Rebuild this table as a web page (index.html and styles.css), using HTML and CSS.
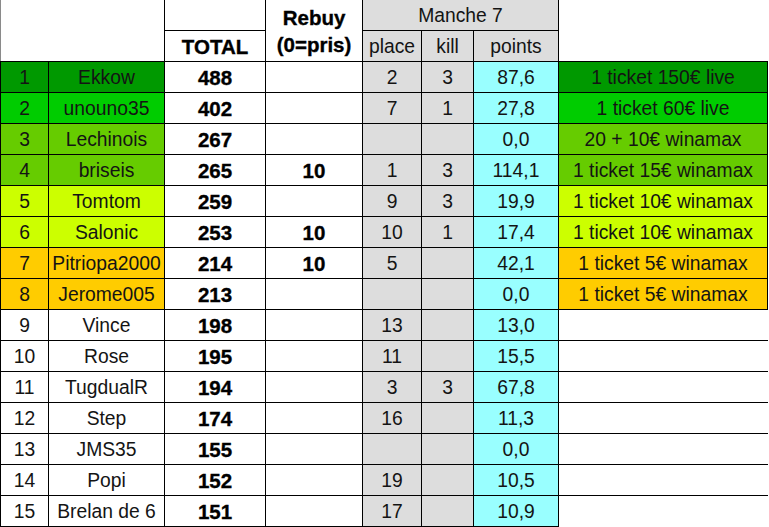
FILE: index.html
```html
<!DOCTYPE html>
<html>
<head>
<meta charset="utf-8">
<link rel="stylesheet" href="styles.css">
</head>
<body>
<table class="sheet">
  <colgroup>
    <col class="c-rank"><col class="c-name"><col class="c-total"><col class="c-rebuy">
    <col class="c-place"><col class="c-kill"><col class="c-points"><col class="c-prize">
  </colgroup>
  <tr class="h1">
    <td class="blank-corner" colspan="2" rowspan="2"></td>
    <td class="hd"></td>
    <td class="hd bold rebuy" rowspan="2">Rebuy<br>(0=pris)</td>
    <td class="hd gray" colspan="3">Manche 7</td>
    <td class="blank" rowspan="2"></td>
  </tr>
  <tr class="h2">
    <td class="hd bold">TOTAL</td>
    <td class="hd gray">place</td>
    <td class="hd gray">kill</td>
    <td class="hd gray">points</td>
  </tr>
  <tr class="r g1"><td>1</td><td>Ekkow</td><td class="bold w">488</td><td class="w"></td><td class="gray">2</td><td class="gray">3</td><td class="cyan">87,6</td><td>1 ticket 150€ live</td></tr>
  <tr class="r g2"><td>2</td><td>unouno35</td><td class="bold w">402</td><td class="w"></td><td class="gray">7</td><td class="gray">1</td><td class="cyan">27,8</td><td>1 ticket 60€ live</td></tr>
  <tr class="r g3"><td>3</td><td>Lechinois</td><td class="bold w">267</td><td class="w"></td><td class="gray"></td><td class="gray"></td><td class="cyan">0,0</td><td>20 + 10€ winamax</td></tr>
  <tr class="r g3"><td>4</td><td>briseis</td><td class="bold w">265</td><td class="bold w">10</td><td class="gray">1</td><td class="gray">3</td><td class="cyan">114,1</td><td>1 ticket 15€ winamax</td></tr>
  <tr class="r g4"><td>5</td><td>Tomtom</td><td class="bold w">259</td><td class="w"></td><td class="gray">9</td><td class="gray">3</td><td class="cyan">19,9</td><td>1 ticket 10€ winamax</td></tr>
  <tr class="r g4"><td>6</td><td>Salonic</td><td class="bold w">253</td><td class="bold w">10</td><td class="gray">10</td><td class="gray">1</td><td class="cyan">17,4</td><td>1 ticket 10€ winamax</td></tr>
  <tr class="r g5"><td>7</td><td>Pitriopa2000</td><td class="bold w">214</td><td class="bold w">10</td><td class="gray">5</td><td class="gray"></td><td class="cyan">42,1</td><td>1 ticket 5€ winamax</td></tr>
  <tr class="r g5"><td>8</td><td>Jerome005</td><td class="bold w">213</td><td class="w"></td><td class="gray"></td><td class="gray"></td><td class="cyan">0,0</td><td>1 ticket 5€ winamax</td></tr>
  <tr class="r"><td>9</td><td>Vince</td><td class="bold">198</td><td></td><td class="gray">13</td><td class="gray"></td><td class="cyan">13,0</td><td class="none"></td></tr>
  <tr class="r"><td>10</td><td>Rose</td><td class="bold">195</td><td></td><td class="gray">11</td><td class="gray"></td><td class="cyan">15,5</td><td class="none"></td></tr>
  <tr class="r"><td>11</td><td>TugdualR</td><td class="bold">194</td><td></td><td class="gray">3</td><td class="gray">3</td><td class="cyan">67,8</td><td class="none"></td></tr>
  <tr class="r"><td>12</td><td>Step</td><td class="bold">174</td><td></td><td class="gray">16</td><td class="gray"></td><td class="cyan">11,3</td><td class="none"></td></tr>
  <tr class="r"><td>13</td><td>JMS35</td><td class="bold">155</td><td></td><td class="gray"></td><td class="gray"></td><td class="cyan">0,0</td><td class="none"></td></tr>
  <tr class="r"><td>14</td><td>Popi</td><td class="bold">152</td><td></td><td class="gray">19</td><td class="gray"></td><td class="cyan">10,5</td><td class="none"></td></tr>
  <tr class="r"><td>15</td><td>Brelan de 6</td><td class="bold">151</td><td></td><td class="gray">17</td><td class="gray"></td><td class="cyan">10,9</td><td class="none"></td></tr>
</table>
</body>
</html>
```
FILE: styles.css
```css
html, body {
  margin: 0;
  padding: 0;
  background: #fff;
}
.sheet {
  border-collapse: collapse;
  table-layout: fixed;
  width: 768px;
  font-family: "Liberation Sans", Arial, sans-serif;
  font-size: 19.3px;
  color: #141414;
}
.c-rank { width: 48px; }
.c-name { width: 116px; }
.c-total { width: 101px; }
.c-rebuy { width: 97px; }
.c-place { width: 59px; }
.c-kill { width: 52px; }
.c-points { width: 85px; }
.c-prize { width: 209px; }

.sheet td {
  border: 1px solid #000;
  text-align: center;
  vertical-align: middle;
  padding: 2px 0 0 0;
  white-space: nowrap;
  overflow: hidden;
}
.h1 { height: 30px; }
.h2 { height: 31px; }
.r { height: 31px; }

.sheet td.hd { padding-top: 3px; }
.sheet td.blank-corner {
  border-top: none;
  border-left: 1px solid #8a8a8a;
  border-bottom: 1px solid #000;
}
.sheet .h1 td { border-top: none; }
.sheet td.blank {
  border-top: none;
  border-right: none;
}
.sheet td.none {
  border-right: none;
  border-bottom: none;
  background: #fff;
}
.sheet td.rebuy { line-height: 27px; padding-top: 2px; }

.bold {
  font-weight: bold;
  font-size: 20.5px;
  color: #000;
  -webkit-text-stroke: 0.35px #000;
}
.gray { background: #dddddd; }
.cyan { background: #99ffff; }
.w { background: #fff; }

.g1 td { background: #009900; }
.g2 td { background: #00cc00; }
.g3 td { background: #66cc00; }
.g4 td { background: #ccff00; }
.g5 td { background: #ffcc00; }
.g1 td.w, .g2 td.w, .g3 td.w, .g4 td.w, .g5 td.w { background: #fff; }
.g1 td.gray, .g2 td.gray, .g3 td.gray, .g4 td.gray, .g5 td.gray { background: #dddddd; }
.g1 td.cyan, .g2 td.cyan, .g3 td.cyan, .g4 td.cyan, .g5 td.cyan { background: #99ffff; }
```
